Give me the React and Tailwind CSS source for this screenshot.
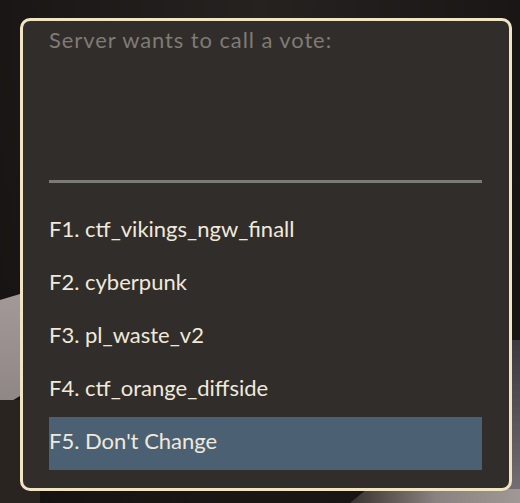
const options = [
  'F1. ctf_vikings_ngw_finall',
  'F2. cyberpunk',
  'F3. pl_waste_v2',
  'F4. ctf_orange_diffside',
  'F5. Don\'t Change',
]

export default function App() {
  return (
    <div className="relative w-[520px] h-[503px] overflow-hidden bg-[#1b1816]" style={{ fontFamily: 'Lato, "Noto Sans", sans-serif' }}>
      {/* scene behind the panel */}
      <div className="absolute inset-0 bg-[radial-gradient(ellipse_at_top,#262220,#141110)]" />
      <div className="absolute left-0 top-[288px] w-[40px] h-[120px] bg-gradient-to-b from-[#a59a9a] to-[#8e8585] [clip-path:polygon(0_10%,100%_0,100%_80%,0_100%)]" />
      <div className="absolute left-0 top-[400px] w-[40px] h-[103px] bg-[#2a2420]" />
      <div className="absolute right-0 top-[340px] w-[30px] h-[163px] bg-gradient-to-b from-[#3c3840] to-[#7a7278]" />
      <div className="absolute right-0 bottom-0 w-[170px] h-[14px] bg-gradient-to-r from-[#3a3430] via-[#8a8280] to-[#a09894] [clip-path:polygon(10%_0,100%_0,100%_100%,0_100%)]" />

      {/* vote panel */}
      <div className="absolute left-[20px] top-[18px] w-[492px] h-[473px] rounded-[10px] border-[3px] border-[#f2e5c3] bg-[#312d2a] pl-[26px] pr-[27px] pt-[6px] flex flex-col">
        <div className="h-[26px] leading-[26px] text-[22px] text-[#7f7b76] tracking-[0.9px]">
          Server wants to call a vote:
        </div>
        <div className="mt-[127px] h-[3px] bg-[#7c7a77]" />
        <div className="mt-[22px] flex flex-col">
          {options.map((o, i) => (
            <div
              key={i}
              className={`h-[53px] pb-[5px] flex items-center text-[22px] leading-[26px] text-[#efe9dc] ${i === 4 ? 'bg-[#4b6173]' : ''}`}
            >
              {o}
            </div>
          ))}
        </div>
      </div>
    </div>
  )
}
